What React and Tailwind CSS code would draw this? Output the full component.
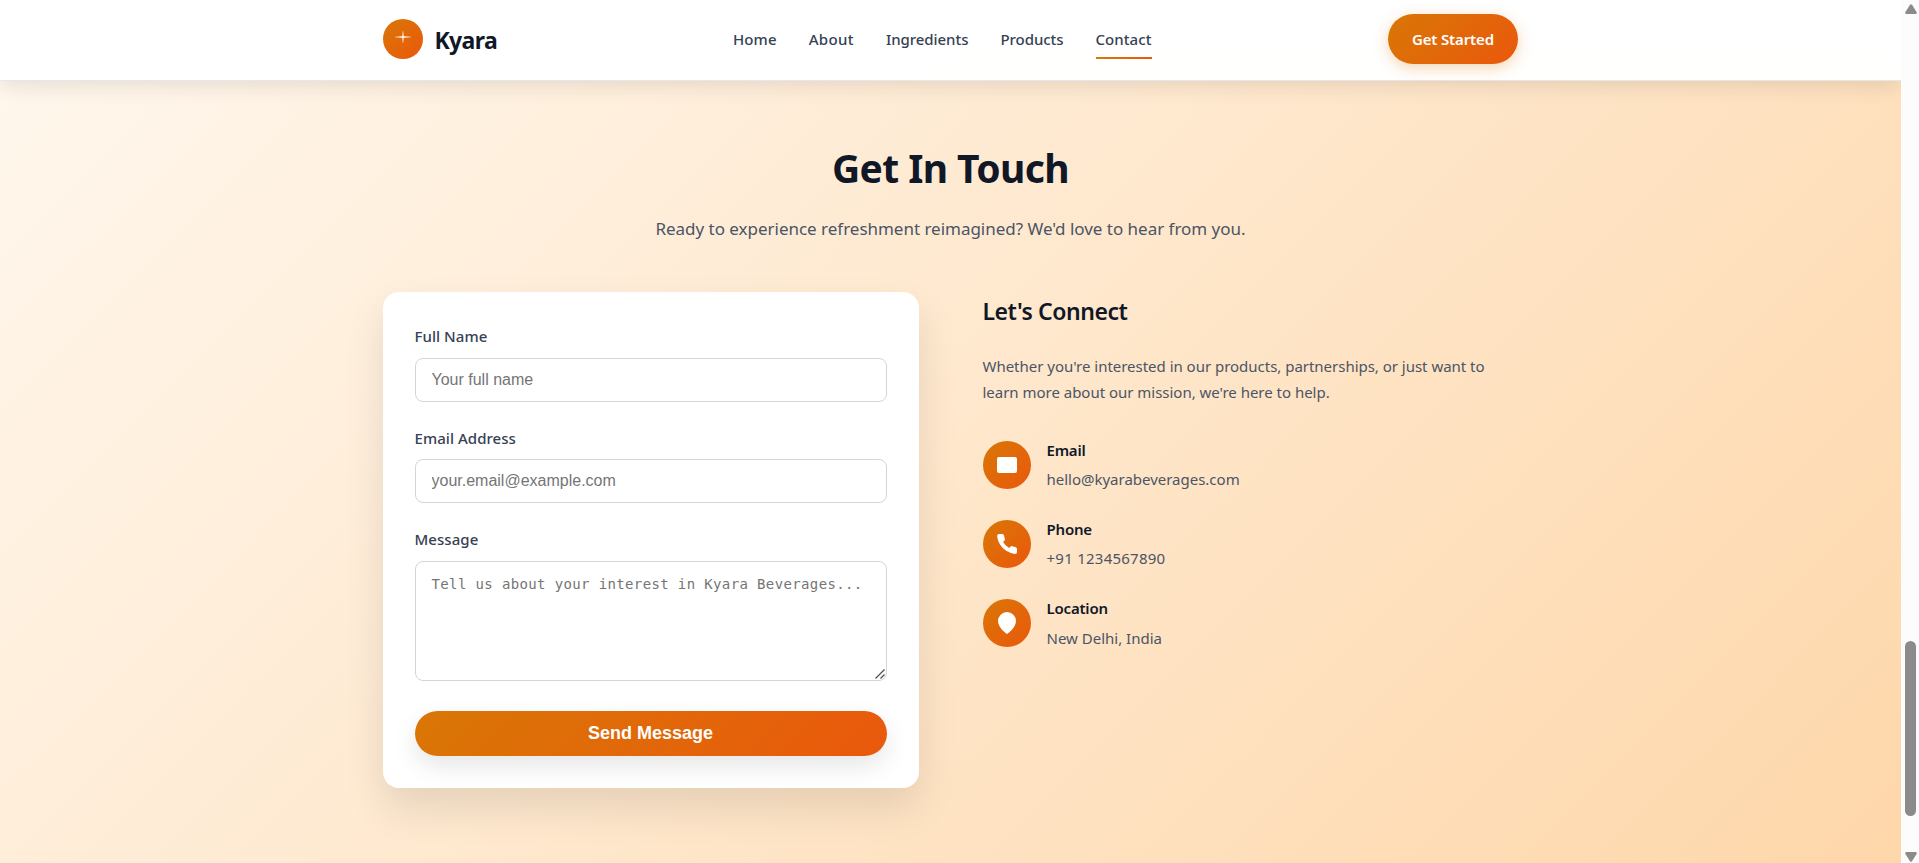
const navItems = [
  { label: "Home", tracking: "tracking-[0.15px]" },
  { label: "About", tracking: "tracking-[0.35px]" },
  { label: "Ingredients", tracking: "tracking-[-0.05px]" },
  { label: "Products", tracking: "tracking-[-0.05px]" },
  { label: "Contact", tracking: "tracking-[0.07px]", active: true },
];

const contacts = [
  {
    title: "Email",
    value: "hello@kyarabeverages.com",
    valueTracking: "tracking-[-0.01px]",
    path: "M4 4h16a2 2 0 0 1 2 2v12a2 2 0 0 1-2 2H4a2 2 0 0 1-2-2V6a2 2 0 0 1 2-2z",
  },
  {
    title: "Phone",
    value: "+91 1234567890",
    valueTracking: "tracking-[0.25px]",
    path: "M22 16.92v3a2 2 0 0 1-2.18 2 19.79 19.79 0 0 1-8.63-3.07 19.5 19.5 0 0 1-6-6 19.79 19.79 0 0 1-3.07-8.67A2 2 0 0 1 4.11 2h3a2 2 0 0 1 2 1.72 12.84 12.84 0 0 0 .7 2.81 2 2 0 0 1-.45 2.11L8.09 9.91a16 16 0 0 0 6 6l1.27-1.27a2 2 0 0 1 2.11-.45 12.84 12.84 0 0 0 2.81.7A2 2 0 0 1 22 16.92z",
  },
  {
    title: "Location",
    value: "New Delhi, India",
    valueTracking: "tracking-[0px]",
    path: "M21 10c0 7-9 13-9 13s-9-6-9-13a9 9 0 0 1 18 0z",
  },
];

function Header() {
  return (
    <header className="relative z-10 h-[81px] border-b border-gray-200 bg-white/98 shadow-[0_5px_20px_rgba(0,0,0,0.1)]">
      <div className="mx-auto flex h-[78px] w-[1136px] items-center justify-between">
        <div className="flex items-center gap-3">
          <div className="flex size-10 items-center justify-center rounded-full bg-[linear-gradient(135deg,#d97706,#ea580c)]">
            <svg width="16" height="12" viewBox="0 0 16 12" className="mb-[5px]">
              <path d="M8 0L8.6 5.3L16 6L8.6 6.7L8 12L7.4 6.7L0 6L7.4 5.3Z" fill="#fff" stroke="#fff" strokeWidth="0.2" />
            </svg>
          </div>
          <span className="w-[62px] pt-[3px] text-[23px] leading-[38.4px] font-bold tracking-[-0.65px] text-gray-900">Kyara</span>
        </div>
        <nav className="flex gap-8 pt-px">
          {navItems.map((item) => (
            <a key={item.label} className={`relative text-[15px] leading-[25.6px] font-medium text-gray-700 ${item.tracking}`}>
              {item.label}
              {item.active && (
                <span className="absolute inset-x-0 -bottom-[6.6px] h-0.5 bg-[linear-gradient(135deg,#d97706,#ea580c)]" />
              )}
            </a>
          ))}
        </nav>
        <button className="mr-[0.6px] h-[50px] w-[130px] rounded-[25px] bg-[linear-gradient(135deg,#d97706,#ea580c)] pt-px text-[15px] leading-[25.6px] font-semibold tracking-[-0.14px] whitespace-nowrap text-white shadow-[0_4px_15px_rgba(217,119,6,0.3)]">
          Get Started
        </button>
      </div>
    </header>
  );
}

function Label({ children }) {
  return <label className="mb-2 block text-[15px] leading-[25.6px] font-medium tracking-[0.05px] text-gray-700">{children}</label>;
}

function ContactForm() {
  const field =
    "block h-11 w-full rounded-lg border border-gray-300 bg-white px-4 font-['Liberation_Sans',Arial,sans-serif] text-base text-gray-900 placeholder:text-[#757575]";
  return (
    <form className="h-[495.6px] w-[536px] rounded-2xl bg-white p-8 shadow-[0_20px_40px_rgba(0,0,0,0.1)]">
      <div className="mb-6">
        <Label>Full Name</Label>
        <input className={field} placeholder="Your full name" />
      </div>
      <div className="mb-6">
        <Label>Email Address</Label>
        <input className={field} placeholder="your.email@example.com" />
      </div>
      <div className="mb-[30px]">
        <Label>Message</Label>
        <div className="relative">
          <textarea
            className="block h-[120px] w-full resize-none rounded-lg border border-gray-300 bg-white px-4 py-[13px] font-['DejaVu_Sans_Mono',monospace] text-[14px] leading-[19px] tracking-[0.37px] text-gray-900 placeholder:text-[#757575]"
            placeholder="Tell us about your interest in Kyara Beverages..."
          />
          <svg width="10" height="10" viewBox="0 0 10 10" className="absolute right-[2px] bottom-[2px]" stroke="#4d4d4d" strokeWidth="1.2" fill="none">
            <path d="M0.5 9.5L9.5 0.5M5.5 9.5L9.5 5.5" />
          </svg>
        </div>
      </div>
      <button
        type="button"
        className="block h-[45px] w-full rounded-[25px] bg-[linear-gradient(135deg,#d97706,#ea580c)] font-['Liberation_Sans',Arial,sans-serif] text-[18px] font-bold text-white shadow-[0_10px_25px_rgba(0,0,0,0.1)]"
      >
        Send Message
      </button>
    </form>
  );
}

function ContactInfo() {
  return (
    <div className="w-[536px]">
      <h3 className="mb-6 pt-[1.4px] text-[23px] leading-[37px] font-semibold tracking-[-0.45px] text-gray-900">
        Let&apos;s Connect
      </h3>
      <p className="mb-8 text-[15px] leading-[25.6px] tracking-[-0.02px] text-gray-600">
        Whether you&apos;re interested in our products, partnerships, or just want to
        <br />
        learn more about our mission, we&apos;re here to help.
      </p>
      <div className="-mt-[0.4px] flex flex-col gap-6">
        {contacts.map((c) => (
          <div key={c.title} className="flex h-[55.2px] items-center gap-4">
            <div className="flex size-12 items-center justify-center rounded-full bg-[linear-gradient(135deg,#d97706,#ea580c)]">
              <svg width="24" height="24" viewBox="0 0 24 24" fill="#fff">
                <path d={c.path} />
              </svg>
            </div>
            <div className="pt-px">
              <h4 className="mb-1 text-[15px] leading-[25.6px] font-semibold tracking-[-0.2px] text-gray-900">{c.title}</h4>
              <p className={`text-[15px] leading-[25.6px] text-gray-600 ${c.valueTracking}`}>{c.value}</p>
            </div>
          </div>
        ))}
      </div>
    </div>
  );
}

function Scrollbar() {
  return (
    <div className="flex h-[863px] w-[18px] flex-col items-center bg-[#fcfcfc]">
      <svg width="12" height="10" viewBox="0 0 12 10" className="mt-1 ml-px" fill="#8b8b8b">
        <path d="M5 0.8Q6 -0.4 7 0.8L11.6 8Q12.2 10 10.6 10H1.4Q-0.2 10 0.4 8Z" />
      </svg>
      <div className="mt-[627px] ml-px h-[175px] w-[11px] rounded-full bg-[#8b8b8b]" />
      <svg width="12" height="10" viewBox="0 0 12 10" className="mt-9 ml-px" fill="#8b8b8b">
        <path d="M5 9.2Q6 10.4 7 9.2L11.6 2Q12.2 0 10.6 0H1.4Q-0.2 0 0.4 2Z" />
      </svg>
    </div>
  );
}

export default function App() {
  return (
    <div className="flex h-[863px] w-[1919px] overflow-hidden font-['Noto_Sans','Open_Sans',sans-serif]">
      <div className="h-[863px] w-[1901px] overflow-hidden">
        <Header />
        <section className="-mt-[26px] h-[813px] bg-[linear-gradient(135deg,#fff7ed_0%,#fed7aa_100%)] pt-20">
          <div className="mx-auto w-[1136px]">
            <h2 className="mb-4 pt-px text-center text-[39px] leading-[63px] font-bold tracking-[-0.6px] text-gray-900">Get In Touch</h2>
            <p className="mb-[48.2px] text-center text-[17px] leading-[28.8px] tracking-[-0.02px] text-gray-600">
              Ready to experience refreshment reimagined? We&apos;d love to hear from you.
            </p>
            <div className="flex items-start gap-16">
              <ContactForm />
              <ContactInfo />
            </div>
          </div>
        </section>
      </div>
      <Scrollbar />
    </div>
  );
}
